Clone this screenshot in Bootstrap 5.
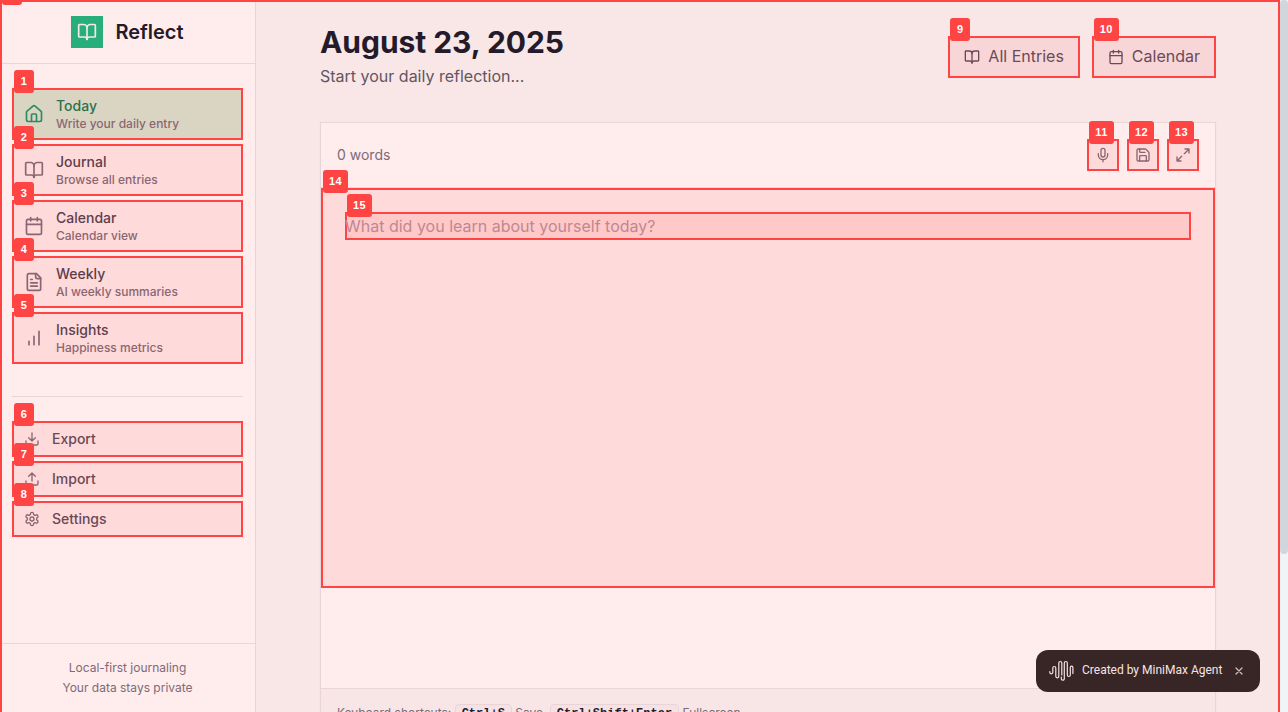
<!DOCTYPE html>
<html lang="en">
<head>
<meta charset="utf-8">
<meta name="viewport" content="width=device-width, initial-scale=1">
<title>Reflect</title>
<link href="https://cdn.jsdelivr.net/npm/bootstrap@5.3.0/dist/css/bootstrap.min.css" rel="stylesheet">
<style>
:root{--mk:#ff4444;--line:#e9d5d8}
body{font-family:Inter,"Liberation Sans",sans-serif;background:#f8e7e6;color:#241a2a;height:712px;overflow:hidden}
svg{fill:none;stroke:currentColor;stroke-width:2;stroke-linecap:round;stroke-linejoin:round;flex:none;display:block}
.i20{width:20px;height:20px}.i16{width:16px;height:16px}
.app{width:1280px;height:712px}
.app-frame{inset:0 0 -4px 0;border:2px solid var(--mk);pointer-events:none;z-index:9}
.side{width:256px;background:#ffecec;border-right:1px solid var(--line)}
.brand{height:64px;border-bottom:1px solid var(--line);gap:12px}
.logo{width:32px;height:32px;background:#28ae7b;color:#f5e9e6}
.brand-name{font-size:20px;font-weight:600;line-height:28px}
.side-nav{padding:24px 12px 0;gap:4px}
.marked{position:relative;border:2px solid var(--mk);background:#ffdada}
.tag{position:absolute;left:0;top:-20px;min-width:20px;height:23px;padding:4px 0;border-radius:3px;background:var(--mk);color:#fff;font:700 11px/15px "Liberation Sans",Arial,sans-serif;letter-spacing:.5px;text-align:center;z-index:5}
.tag.wide{min-width:25px}
.nav-row{height:52px;padding:0 10px;gap:12px;color:#8a6672;text-decoration:none}
.nav-row b{display:block;font-size:14px;font-weight:500;line-height:20px;color:#5c3f4c}
.nav-row span.sub{display:block;font-size:12px;font-weight:500;line-height:16px}
.nav-row.on{background:#dad5c3}.nav-row.on svg{color:#2f8a63}.nav-row.on b{color:#2c714f}
.tools{margin:32px 12px 0;padding-top:24px;border-top:1px solid var(--line);gap:4px}
.tool{height:36px;padding:0 10px;gap:12px;font-size:14px;line-height:20px;font-weight:500;color:#6a4855;text-decoration:none}
.tool svg{color:#8a6672}
.side-foot{border-top:1px solid var(--line);height:69px;padding-top:14px;font-size:12px;line-height:20px;color:#7d6a78}
.main{padding:24px 64px 0}
.top{height:66px}
h1{font-size:30px;line-height:36px;font-weight:700;margin:0 0 4px;letter-spacing:-.05px}
.lead-in{font-size:16px;line-height:24px;color:#635562}
.act{height:42px;padding:0 14px;gap:8px;background:#f8d6d8;color:#6b4a58;font-size:16px;line-height:24px;text-decoration:none}
.act .cap{padding-bottom:2px}
.editor{margin-top:32px;background:#ffecec;border:1px solid var(--line);box-shadow:0 1px 2px #8a60600d}
.bar{height:65px;padding:0 16px;border-bottom:1px solid var(--line);font-size:14px;line-height:20px;color:#7d6a78}
.sq{width:32px;height:32px;color:#8a6672;padding:0}
.count{padding-bottom:1px}
.pad-area{height:500px}
.write{height:400px;padding:22px}
.prompt-line{height:28px;background:#ffc9c9;color:#bf8790;font-size:16px;line-height:24px}
.prompt-line .q{margin-left:-2px}
.keys{height:60px;border-top:1px solid var(--line);background:#f8e6e6;padding:15px 16px;font-size:12px;line-height:16px;color:#7d6a78;white-space:nowrap}
.keys kbd{display:inline-block;background:#f6e2e4;border:1px solid var(--line);border-radius:4px;color:#241a2a;font:700 12px/16px "Liberation Mono",monospace;padding:1px 6px}
.track{width:8px;background:#f1f4f6}
.thumb{height:554px;background:#d1d5dc;border-radius:4px}
.made{position:fixed;left:1036px;top:650px;width:224px;height:42px;border-radius:12px;background:#382525;color:#f5e4e4;font:400 12px/16px Roboto,sans-serif;z-index:8}
.made .by{margin-left:8px;padding-bottom:2px}
.made .wave{margin-left:13px;stroke-width:1.2}
.made .x{margin-left:13px;stroke-width:1.3;color:#cfbcbc}
</style>
</head>
<body class="d-flex">
<svg class="d-none">
<symbol id="book" viewBox="0 0 24 24"><path d="M12 7v14"/><path d="M3 18a1 1 0 0 1-1-1V4a1 1 0 0 1 1-1h5a4 4 0 0 1 4 4 4 4 0 0 1 4-4h5a1 1 0 0 1 1 1v13a1 1 0 0 1-1 1h-6a3 3 0 0 0-3 3 3 3 0 0 0-3-3z"/></symbol>
<symbol id="home" viewBox="0 0 24 24"><path d="M15 21v-8a1 1 0 0 0-1-1h-4a1 1 0 0 0-1 1v8"/><path d="M3 10a2 2 0 0 1 .709-1.528l7-5.999a2 2 0 0 1 2.582 0l7 5.999A2 2 0 0 1 21 10v9a2 2 0 0 1-2 2H5a2 2 0 0 1-2-2z"/></symbol>
<symbol id="cal" viewBox="0 0 24 24"><path d="M8 2v4M16 2v4M3 10h18"/><rect width="18" height="18" x="3" y="4" rx="2"/></symbol>
<symbol id="doc" viewBox="0 0 24 24"><path d="M15 2H6a2 2 0 0 0-2 2v16a2 2 0 0 0 2 2h12a2 2 0 0 0 2-2V7Z"/><path d="M14 2v4a2 2 0 0 0 2 2h4M10 9H8M16 13H8M16 17H8"/></symbol>
<symbol id="bars" viewBox="0 0 24 24"><path d="M12 20V10M18 20V4M6 20v-4"/></symbol>
<symbol id="down" viewBox="0 0 24 24"><path d="M21 15v4a2 2 0 0 1-2 2H5a2 2 0 0 1-2-2v-4M7 10l5 5 5-5M12 15V3"/></symbol>
<symbol id="up" viewBox="0 0 24 24"><path d="M21 15v4a2 2 0 0 1-2 2H5a2 2 0 0 1-2-2v-4M17 8l-5-5-5 5M12 3v12"/></symbol>
<symbol id="gear" viewBox="0 0 24 24"><path d="M12.22 2h-.44a2 2 0 0 0-2 2v.18a2 2 0 0 1-1 1.73l-.43.25a2 2 0 0 1-2 0l-.15-.08a2 2 0 0 0-2.73.73l-.22.38a2 2 0 0 0 .73 2.73l.15.1a2 2 0 0 1 1 1.72v.51a2 2 0 0 1-1 1.74l-.15.09a2 2 0 0 0-.73 2.73l.22.38a2 2 0 0 0 2.73.73l.15-.08a2 2 0 0 1 2 0l.43.25a2 2 0 0 1 1 1.73V20a2 2 0 0 0 2 2h.44a2 2 0 0 0 2-2v-.18a2 2 0 0 1 1-1.73l.43-.25a2 2 0 0 1 2 0l.15.08a2 2 0 0 0 2.73-.73l.22-.39a2 2 0 0 0-.73-2.73l-.15-.08a2 2 0 0 1-1-1.74v-.5a2 2 0 0 1 1-1.74l.15-.09a2 2 0 0 0 .73-2.73l-.22-.38a2 2 0 0 0-2.73-.73l-.15.08a2 2 0 0 1-2 0l-.43-.25a2 2 0 0 1-1-1.73V4a2 2 0 0 0-2-2z"/><circle cx="12" cy="12" r="3"/></symbol>
<symbol id="mic" viewBox="0 0 24 24"><path d="M12 2a3 3 0 0 0-3 3v7a3 3 0 0 0 6 0V5a3 3 0 0 0-3-3Z"/><path d="M19 10v2a7 7 0 0 1-14 0v-2M12 19v3"/></symbol>
<symbol id="save" viewBox="0 0 24 24"><path d="M15.2 3a2 2 0 0 1 1.4.6l3.8 3.8a2 2 0 0 1 .6 1.4V19a2 2 0 0 1-2 2H5a2 2 0 0 1-2-2V5a2 2 0 0 1 2-2z"/><path d="M17 21v-7a1 1 0 0 0-1-1H8a1 1 0 0 0-1 1v7M7 3v4a1 1 0 0 0 1 1h7"/></symbol>
<symbol id="max" viewBox="0 0 24 24"><path d="M15 3h6v6M9 21H3v-6M21 3l-7 7M3 21l7-7"/></symbol>
</svg>

<div class="app d-flex position-relative flex-shrink-0 overflow-hidden">
  <div class="app-frame position-absolute"><span class="tag">0</span></div>

  <aside class="side d-flex flex-column flex-shrink-0">
    <div class="brand d-flex align-items-center justify-content-center flex-shrink-0">
      <div class="logo d-flex align-items-center justify-content-center"><svg class="i20"><use href="#book"/></svg></div>
      <div class="brand-name">Reflect</div>
    </div>
    <nav class="side-nav d-flex flex-column">
      <a class="marked nav-row on d-flex align-items-center" href="#"><span class="tag">1</span><svg class="i20"><use href="#home"/></svg><div><b>Today</b><span class="sub">Write your daily entry</span></div></a>
      <a class="marked nav-row d-flex align-items-center" href="#"><span class="tag">2</span><svg class="i20"><use href="#book"/></svg><div><b>Journal</b><span class="sub">Browse all entries</span></div></a>
      <a class="marked nav-row d-flex align-items-center" href="#"><span class="tag">3</span><svg class="i20"><use href="#cal"/></svg><div><b>Calendar</b><span class="sub">Calendar view</span></div></a>
      <a class="marked nav-row d-flex align-items-center" href="#"><span class="tag">4</span><svg class="i20"><use href="#doc"/></svg><div><b>Weekly</b><span class="sub">AI weekly summaries</span></div></a>
      <a class="marked nav-row d-flex align-items-center" href="#"><span class="tag">5</span><svg class="i20"><use href="#bars"/></svg><div><b>Insights</b><span class="sub">Happiness metrics</span></div></a>
    </nav>
    <div class="tools d-flex flex-column">
      <a class="marked tool d-flex align-items-center" href="#"><span class="tag">6</span><svg class="i16"><use href="#down"/></svg>Export</a>
      <a class="marked tool d-flex align-items-center" href="#"><span class="tag">7</span><svg class="i16"><use href="#up"/></svg>Import</a>
      <a class="marked tool d-flex align-items-center" href="#"><span class="tag">8</span><svg class="i16"><use href="#gear"/></svg>Settings</a>
    </div>
    <div class="side-foot mt-auto text-center"><div>Local-first journaling</div><div>Your data stays private</div></div>
  </aside>

  <main class="main flex-grow-1">
    <header class="top d-flex justify-content-between align-items-center">
      <div class="align-self-start"><h1>August 23, 2025</h1><div class="lead-in">Start your daily reflection...</div></div>
      <div class="d-flex" style="gap:12px">
        <a class="marked act d-flex align-items-center" href="#"><span class="tag">9</span><svg class="i16"><use href="#book"/></svg><span class="cap">All Entries</span></a>
        <a class="marked act d-flex align-items-center" href="#"><span class="tag wide">10</span><svg class="i16"><use href="#cal"/></svg><span class="cap">Calendar</span></a>
      </div>
    </header>
    <section class="editor">
      <div class="bar d-flex align-items-center justify-content-between">
        <span class="count">0 words</span>
        <div class="d-flex gap-2">
          <button class="marked sq d-flex align-items-center justify-content-center"><span class="tag wide">11</span><svg class="i16"><use href="#mic"/></svg></button>
          <button class="marked sq d-flex align-items-center justify-content-center"><span class="tag wide">12</span><svg class="i16"><use href="#save"/></svg></button>
          <button class="marked sq d-flex align-items-center justify-content-center"><span class="tag wide">13</span><svg class="i16"><use href="#max"/></svg></button>
        </div>
      </div>
      <div class="pad-area">
        <div class="marked write"><span class="tag wide">14</span>
          <div class="marked prompt-line"><span class="tag wide">15</span><span class="q">What did you learn about yourself today?</span></div>
        </div>
      </div>
      <div class="keys">Keyboard shortcuts: <kbd>Ctrl+S</kbd> Save, <kbd>Ctrl+Shift+Enter</kbd> Fullscreen</div>
    </section>
  </main>
</div>
<div class="track flex-shrink-0"><div class="thumb"></div></div>

<div class="made d-flex align-items-center">
  <svg class="wave" width="25" height="22" viewBox="0 0 25 22"><path d="M.8 11.500v.8a1.500 1.500 0 0 0 3 0V8a1.500 1.500 0 0 1 3 0v8.300a1.500 1.500 0 0 0 3 0V3a1.500 1.500 0 0 1 3 0v12M12.300 17v1.700a1.500 1.500 0 0 0 3 0V3a1.500 1.500 0 0 1 3 0v12a1.500 1.500 0 0 0 3 0V7.500a1.300 1.300 0 0 1 2.600 0v6"/></svg>
  <span class="by">Created by MiniMax Agent</span>
  <svg class="x" width="8" height="8" viewBox="0 0 8 8"><path d="M1 1l6 6M7 1L1 7"/></svg>
</div>
<script src="https://cdn.jsdelivr.net/npm/bootstrap@5.3.0/dist/js/bootstrap.bundle.min.js"></script>
</body>
</html>
